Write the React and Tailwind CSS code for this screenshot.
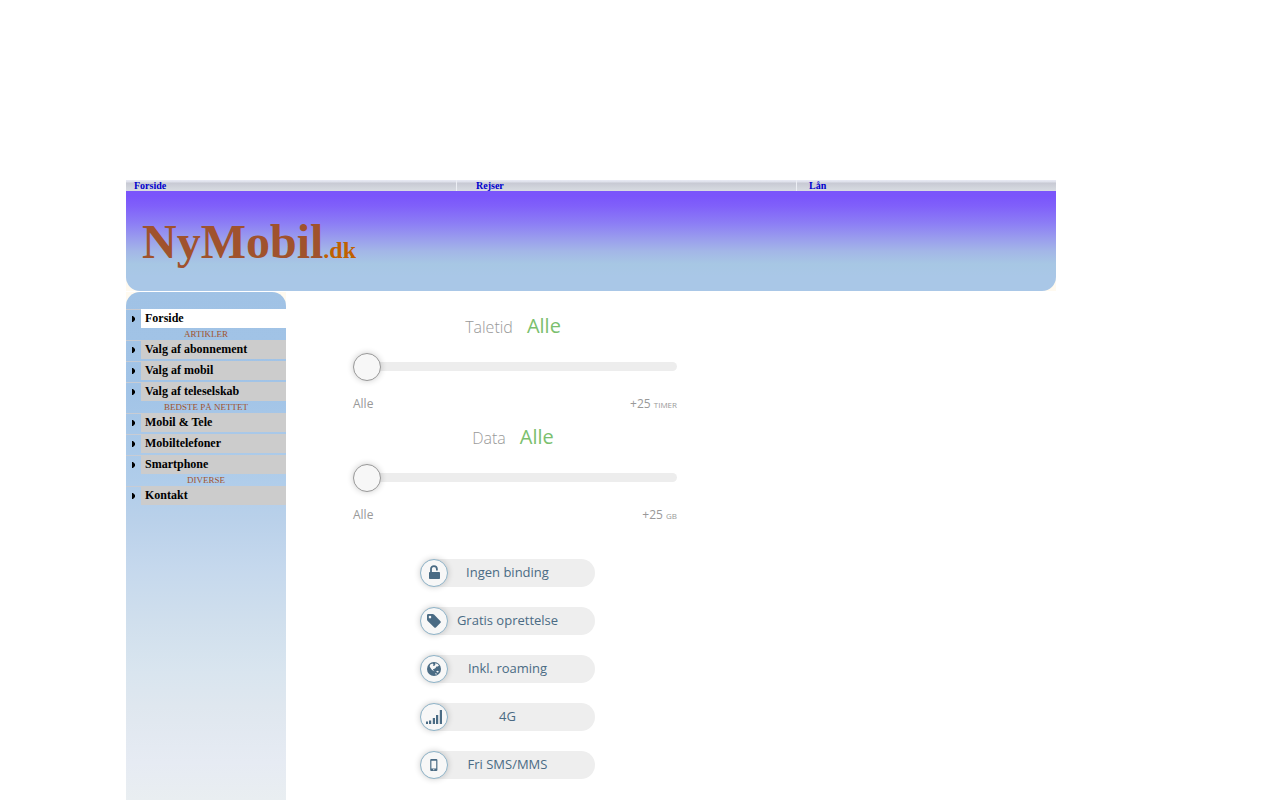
import React, { useState } from 'react';

const topLinks = [
    { label: "Forside", className: "pl-2" },
    { label: "Rejser", className: "pl-[19px]" },
    { label: "Lån", className: "pl-3" },
];

const menu = [
    { title: null, items: ["Forside"] },
    { title: "Artikler", items: ["Valg af abonnement", "Valg af mobil", "Valg af teleselskab"] },
    { title: "Bedste på nettet", items: ["Mobil & Tele", "Mobiltelefoner", "Smartphone"] },
    { title: "Diverse", items: ["Kontakt"] },
];

const UnlockIcon = () => (
    <svg width="12" height="16" viewBox="0 0 12 16" aria-hidden="true">
        <path d="M3 8V4a2.8 2.8 0 0 1 5.9 0v1.4" fill="none" stroke="currentColor" strokeWidth="1.8" />
        <rect x="1" y="7" width="11" height="7" rx="0.8" fill="currentColor" />
    </svg>
);

const TagIcon = () => (
    <svg width="14" height="14" viewBox="0 0 14 14" aria-hidden="true">
        <path
            d="M1.2 0H5.6Q6.4 0 7 .6L13.5 7.2Q14.2 8 13.5 8.8L8.9 13.4Q8.1 14.1 7.3 13.4L.7 6.9Q0 6.2 0 5.4V1.2Q0 0 1.2 0ZM3 1.8A1.3 1.3 0 1 0 3 4.4A1.3 1.3 0 1 0 3 1.8Z"
            fill="currentColor"
            fillRule="evenodd"
        />
    </svg>
);

const GlobeIcon = () => (
    <svg width="14" height="14" viewBox="0 0 14 14" aria-hidden="true">
        <circle cx="7" cy="7" r="7" fill="currentColor" />
        <path
            d="M3.2 2.4L5.4 1.4L6.6 2.6L5.8 3.6L7.2 4L8.4 2.4L8 1.2L10.6 1.9L12 3.6L10.8 4.4L9.4 4.6L8.6 6L7 7L6 7L6.4 8.4L7.6 9.2L6.4 9L4.6 7.6L3.4 5.8L2.6 4.2Z M9 9.2L11 8.8L11.8 9.8L10.8 10.8ZM8 11.2L9.6 11.4L9.8 12.4L8.6 12.6Z"
            fill="#f7f7f7"
        />
    </svg>
);

const SignalIcon = () => (
    <svg width="16" height="14" viewBox="0 0 16 14" aria-hidden="true">
        <path d="M0 11.4h2V14H0zM3 10.6h2.2V14H3zM6.8 8h2.2v6H6.8zM10 5h2.2v9H10zM13.8 0H16v14h-2.2z" fill="currentColor" />
    </svg>
);

const PhoneIcon = () => (
    <svg width="8" height="12" viewBox="0 0 8 12" aria-hidden="true">
        <path
            d="M1.2 0H6.3Q7.4 0 7.4 1.1V10.9Q7.4 12 6.3 12H1.2Q.2 12 .2 10.9V1.1Q.2 0 1.2 0ZM1.4 1.7V9.4H6.2V1.7ZM3.8 10.1A.6.6 0 1 0 3.8 11.3A.6.6 0 1 0 3.8 10.1Z"
            fill="currentColor"
            fillRule="evenodd"
        />
    </svg>
);

const options = [
    { label: "Ingen binding", Icon: UnlockIcon },
    { label: "Gratis oprettelse", Icon: TagIcon },
    { label: "Inkl. roaming", Icon: GlobeIcon },
    { label: "4G", Icon: SignalIcon },
    { label: "Fri SMS/MMS", Icon: PhoneIcon },
];

const TopNav = () => (
    <nav className="grid grid-cols-[33fr_34fr_26fr] h-[11px] bg-linear-to-b from-[#e6e8f2] from-10% via-[#c8cad4] via-30% to-[#d8dce2] font-bold text-[10px] leading-[11px]">
        {topLinks.map((link, i) => (
            <div key={link.label} className={i > 0 ? "border-l border-[#eceef4]" : ""}>
                <a href="#" className={`block text-[#0000cd] ${link.className}`}>{link.label}</a>
            </div>
        ))}
    </nav>
);

const Header = () => (
    <header className="bg-[#fffaf0]">
        <div className="h-[100px] pl-4 pt-6 rounded-b-[14px] bg-[linear-gradient(to_bottom,#7a55fb_5%,#8060fa_15%,#8c7df5_32%,#9a9eed_48%,#a3b6e7_60%,#a7c7e4_73%,#a9c7e7_85%)]">
            <h1 className="font-bold text-5xl leading-[54px] text-[#a0522d]">
                NyMobil<span className="text-2xl text-[#c06000]">.dk</span>
            </h1>
        </div>
    </header>
);

const MenuItem = ({ label, active }) => (
    <li className="flex h-[19px]">
        <span className="flex w-[15px] items-center justify-center border-t border-[#c8ccd4]">
            <svg width="3" height="6" viewBox="0 0 3 6" aria-hidden="true">
                <path d="M0 0H1L3 2V4L1 6H0Z" fill="#000" />
            </svg>
        </span>
        <a
            href="#"
            className={`flex-1 pl-1 font-bold text-xs leading-[19px] text-black ${active ? "bg-white" : "bg-[#cccccc]"}`}
        >
            {label}
        </a>
    </li>
);

const Sidebar = () => (
    <aside className="w-40 shrink-0 bg-[#fffaf0]">
        <div className="h-full pt-[17px] rounded-t-[14px] bg-[linear-gradient(to_bottom,#a0c2e5_0px,#a2c4e7_100px,#b0cdea_190px,#bad1ea_230px,#c5d8ed_275px,#d0dfed_330px,#d9e5ef_380px,#dfe7ef_415px,#e6ebf3_470px,#e9eef1_508px)]">
            {menu.map((group) => (
                <div key={group.items[0]}>
                    {group.title && (
                        <h2 className="text-center text-[9px] leading-3 uppercase text-[#a0522d]">{group.title}</h2>
                    )}
                    <ul className="flex flex-col gap-0.5">
                        {group.items.map((item) => (
                            <MenuItem key={item} label={item} active={item === "Forside"} />
                        ))}
                    </ul>
                </div>
            ))}
        </div>
    </aside>
);

const RangeFilter = ({ id, label, unit }) => {
    const [value, setValue] = useState(0);

    return (
        <div className="h-[111px] text-[#999999]">
            <div className="flex items-baseline justify-center gap-[14px] pr-1 leading-7">
                <label htmlFor={id} className="font-light text-base leading-7">{label}</label>
                <output htmlFor={id} className="text-xl leading-7 text-[#7bbf6e]">
                    {value === 0 ? "Alle" : value}
                </output>
            </div>
            <input
                id={id}
                type="range"
                min="0"
                max="25"
                value={value}
                onChange={(e) => setValue(Number(e.target.value))}
                className="block w-full h-[9px] mt-[21px] appearance-none rounded-full bg-[#ededed] [&::-webkit-slider-thumb]:appearance-none [&::-webkit-slider-thumb]:size-7 [&::-webkit-slider-thumb]:rounded-full [&::-webkit-slider-thumb]:border [&::-webkit-slider-thumb]:border-[#999999] [&::-webkit-slider-thumb]:bg-[#f7f7f7] [&::-webkit-slider-thumb]:shadow-[0_0_6px_rgba(0,0,0,0.2)]"
            />
            <div className="flex justify-between mt-6 text-xs leading-[18px]">
                <span>Alle</span>
                <span>+25 <small className="text-[8px] uppercase">{unit}</small></span>
            </div>
        </div>
    );
};

const OptionButton = ({ label, Icon }) => {
    const [on, setOn] = useState(false);

    return (
        <button
            type="button"
            aria-pressed={on}
            onClick={() => setOn(!on)}
            className="relative w-[175px] h-7 pb-0.5 rounded-full bg-[#eeeeee] text-center text-[13px] leading-[26px] text-[#4a6b84]"
        >
            <span className="absolute left-0 top-0 flex size-7 items-center justify-center rounded-full border border-[#8fb4c9] bg-[#f7f7f7] shadow-[0_0_6px_rgba(0,0,0,0.2)]">
                <Icon />
            </span>
            {label}
        </button>
    );
};

export default function App() {
    return (
        <div className="flex flex-col min-h-screen bg-white font-['Liberation_Serif',serif]">
            <div className="flex flex-col flex-1 w-full max-w-[1028px] mx-auto pt-[180px]">
                <div className="w-full max-w-[930px]">
                    <TopNav />
                    <Header />
                </div>
                <div className="flex flex-1 mt-px">
                    <Sidebar />
                    <main className="w-[324px] ml-[67px] pt-5 font-['Open_Sans',sans-serif]">
                        <RangeFilter id="taletid" label="Taletid" unit="timer" />
                        <RangeFilter id="data" label="Data" unit="GB" />
                        <div className="flex flex-col items-center gap-5 pt-[25px] pr-[15px] pb-5">
                            {options.map((option) => (
                                <OptionButton key={option.label} label={option.label} Icon={option.Icon} />
                            ))}
                        </div>
                    </main>
                </div>
            </div>
        </div>
    );
}
